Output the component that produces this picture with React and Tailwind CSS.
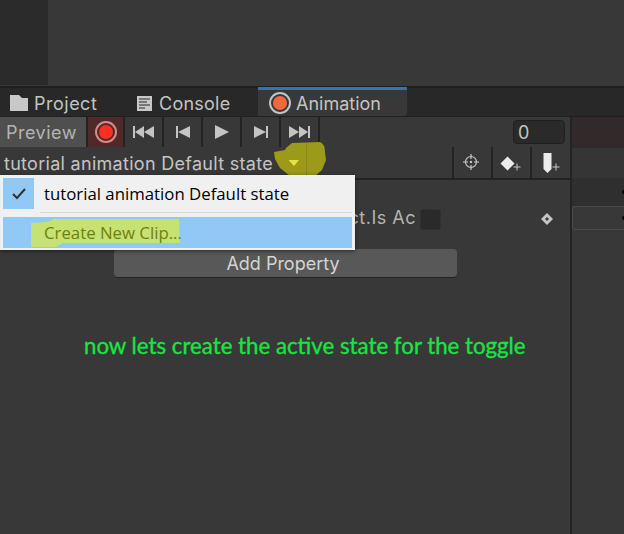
import React from 'react';

const font = 'font-["Inter","Noto_Sans",sans-serif]';

const TransportButton = ({ children }) => (
  <div className="flex h-full w-[39px] items-center justify-center border-r-2 border-[#232323] pb-[1px]">
    <svg width="24" height="16" viewBox="0 0 24 16" fill="#c4c4c4">{children}</svg>
  </div>
);

const ToolButton = ({ children }) => (
  <div className="flex h-full w-[39px] items-center justify-center border-l-2 border-[#232323]">
    <svg width="28" height="24" viewBox="0 0 28 24" fill="none">{children}</svg>
  </div>
);

export default function App() {
  return (
    <div className={`flex h-[534px] w-[624px] flex-col overflow-hidden bg-[#383838] text-[#c4c4c4] ${font}`}>
      {/* scene area */}
      <div className="flex h-[86px] shrink-0">
        <div className="h-[85px] w-[48px] bg-[#2b2b2b]" />
      </div>
      <div className="h-[2px] shrink-0 bg-[#1f1f1f]" />

      {/* tabs */}
      <div className="flex h-[29px] shrink-0 items-stretch border-b border-[#1f1f1f] bg-[#282828] text-[18px]">
        <div className="flex w-[122px] items-center pl-[10px] pt-[2px] tracking-[0.5px]">
          <svg width="18" height="16" viewBox="0 0 18 16" fill="#c8c8c8">
            <path d="M0 0h9l3 3h6v13H0z" />
          </svg>
          <span className="ml-[6px]">Project</span>
        </div>
        <div className="flex w-[136px] items-center pl-[15px] pt-[2px] tracking-[0.25px]">
          <svg width="15" height="15" viewBox="0 0 15 15">
            <path d="M0 0h15v15H0z" fill="#c8c8c8" />
            <path d="M2 3h11M2 6h8M2 9h11M2 12h6" stroke="#282828" strokeWidth="1.2" />
          </svg>
          <span className="ml-[7px]">Console</span>
        </div>
        <div className="-mt-[1px] flex w-[149px] items-center rounded-br-[3px] border-t-[3px] border-[#3a72b0] bg-[#383838] pl-[11px]">
          <span className="flex h-[22px] w-[22px] items-center justify-center rounded-full border-2 border-[#c4c4c4]">
            <span className="h-[14px] w-[14px] rounded-full bg-[#f2683a]" />
          </span>
          <span className="ml-[5px]">Animation</span>
        </div>
      </div>

      <div className="flex min-h-0 flex-1">
        {/* animation panel */}
        <div className="relative w-[572px] shrink-0 border-r-2 border-[#232323]">
          <div className="flex h-[30px] items-center">
            <div className="flex h-full w-[86px] items-center bg-[#4f4f4f] pl-[6px] text-[18px] tracking-[0.5px] text-[#b4b4b4]">Preview</div>
            <div className="flex h-full w-[39px] items-center justify-center border-x-2 border-[#232323] bg-[#4f2a2a]">
              <span className="flex h-[22px] w-[22px] items-center justify-center rounded-full border-2 border-[#d88a86]">
                <span className="h-[14px] w-[14px] rounded-full bg-[#fb3022]" />
              </span>
            </div>
            <TransportButton><path d="M1 2h2v12H1zM12 2v12L3 8zM22 2v12l-10-6z" /></TransportButton>
            <TransportButton><path d="M5 2h2v12H5zM19 2v12L7 8z" /></TransportButton>
            <TransportButton><path d="M5 1l14 7-14 7z" /></TransportButton>
            <TransportButton><path d="M17 2h2v12h-2zM5 2v12l12-6z" /></TransportButton>
            <TransportButton><path d="M1 2v12l10-6zM11 2v12l9-6zM20 2h2v12h-2z" /></TransportButton>
            <div className="flex-1" />
            <div className="mr-[5px] flex h-[24px] w-[52px] items-center rounded-[4px] border border-[#1f1f1f] bg-[#2a2a2a] pl-[4px] text-[18px]">0</div>
          </div>

          <div className="flex h-[33px] items-center border-b-2 border-[#232323] pr-[1px]">
            <span className="pl-[4px] pt-[2px] text-[18px] tracking-[0.29px]">tutorial animation Default state</span>
            <div className="flex-1" />
            <ToolButton>
              <circle cx="12" cy="11" r="5.5" stroke="#c8c8c8" strokeWidth="1.2" />
              <circle cx="12" cy="11" r="1.2" fill="#c8c8c8" />
              <path d="M12 3v5M12 14v5M4 11h5M15 11h5" stroke="#c8c8c8" strokeWidth="1.2" />
            </ToolButton>
            <ToolButton>
              <path d="M9.500 5.500l7 7-7 7-7-7z" fill="#ececec" />
              <path d="M19 12.500v7M15.500 16h7" stroke="#c8c8c8" strokeWidth="1" />
            </ToolButton>
            <ToolButton>
              <path d="M6.500 2h8v16l-4 4-4-4z" fill="#ececec" />
              <path d="M19 12.500v7M15.500 16h7" stroke="#c8c8c8" strokeWidth="1" />
            </ToolButton>
          </div>

          {/* property row */}
          <div className="flex h-[69px] items-center justify-end pt-[5px]">
            <span className="text-[18px] tracking-[0.5px] text-[#b4b4b4]">ct.Is Ac</span>
            <span className="ml-[4px] mt-[4px] h-[21px] w-[21px] rounded-[3px] border border-[#303030] bg-[#2a2a2a]" />
            <svg className="ml-[100px] mr-[17px] mt-[4px]" width="12" height="12" viewBox="0 0 12 12">
              <path d="M6 0l6 6-6 6-6-6z" fill="#c4c4c4" />
              <path d="M6 4l2 2-2 2-2-2z" fill="#383838" />
            </svg>
          </div>
          <div className="flex justify-start pl-[114px]">
            <div className="flex h-[29px] w-[343px] items-center justify-center rounded-[4px] border-b border-[#232323] bg-[#585858] pr-[5px] pt-[1px] text-[18px] text-[#d4d4d4]">
              Add Property
            </div>
          </div>

          <p className="pl-[84px] pt-[52px] font-['Lato',sans-serif] text-[22.250px] leading-[32px] text-[#17e640] [-webkit-text-stroke:0.3px_#17e640]">
            now lets create the active state for the toggle
          </p>

          {/* yellow marker over the dropdown arrow */}
          <svg className="absolute left-[270px] top-[18px]" width="60" height="44" viewBox="0 0 60 44">
            <path d="M4 17l11-2 1-2 6-5 28-1q5 2 5 10l1 8-4 10-7 6H20L10 33 5 24z" fill="#9c9a18" />
            <path d="M36 8h1v34h-1z" fill="#8a8816" />
            <path d="M18.500 25H29l-5 6z" fill="#e6e24c" />
          </svg>

          {/* popup menu */}
          <div className="absolute left-0 top-[58px] h-[75px] w-[355px] border-[3px] border-b-[2px] border-[#f0f0f0] bg-[#f0f0f0] font-['Open_Sans',sans-serif] text-[16.800px] shadow-[0_1px_4px_rgba(0,0,0,0.5)]">
            <div className="flex h-[31px] items-center">
              <span className="flex h-full w-[31px] items-center justify-center bg-[#90c8f6]">
                <svg width="14" height="12" viewBox="0 0 14 12" fill="none">
                  <path d="M1 6l4 4 8-9" stroke="#333" strokeWidth="2" />
                </svg>
              </span>
              <span className="pl-[10px] text-black">tutorial animation Default state</span>
            </div>
            <div className="ml-[37px] mt-[3px] h-[1px] bg-[#d8d8d8]" />
            <div className="relative mt-[4px] flex h-[31px] items-center bg-[#90c8f6] pl-[41px] pt-[1px] text-[#6e7f10]">
              <svg className="absolute left-[27px] top-[1px]" width="152" height="30" viewBox="0 0 152 30">
                <path d="M1 5l16-1 7-3h125l1 24H33l-7 4H1z" fill="#c6e272" />
              </svg>
              <span className="relative">Create New Clip...</span>
            </div>
          </div>
        </div>

        {/* right column */}
        <div className="flex flex-1 flex-col">
          <div className="h-[31px] border-b border-[#2a2a2a] bg-[#322a2a]" />
          <div className="h-[30px] bg-[#353535]" />
          <div className="flex h-[28px] items-center justify-end bg-[#2f2f2f]">
            <span className="h-[4px] w-[2px] rounded-l-full bg-black" />
          </div>
          <div className="flex h-[24px] items-center justify-end rounded-l-[3px] border border-r-0 border-[#4a4a4a] bg-[#383838]">
            <span className="h-[4px] w-[2px] rounded-l-full bg-black" />
          </div>
        </div>
      </div>
    </div>
  );
}
